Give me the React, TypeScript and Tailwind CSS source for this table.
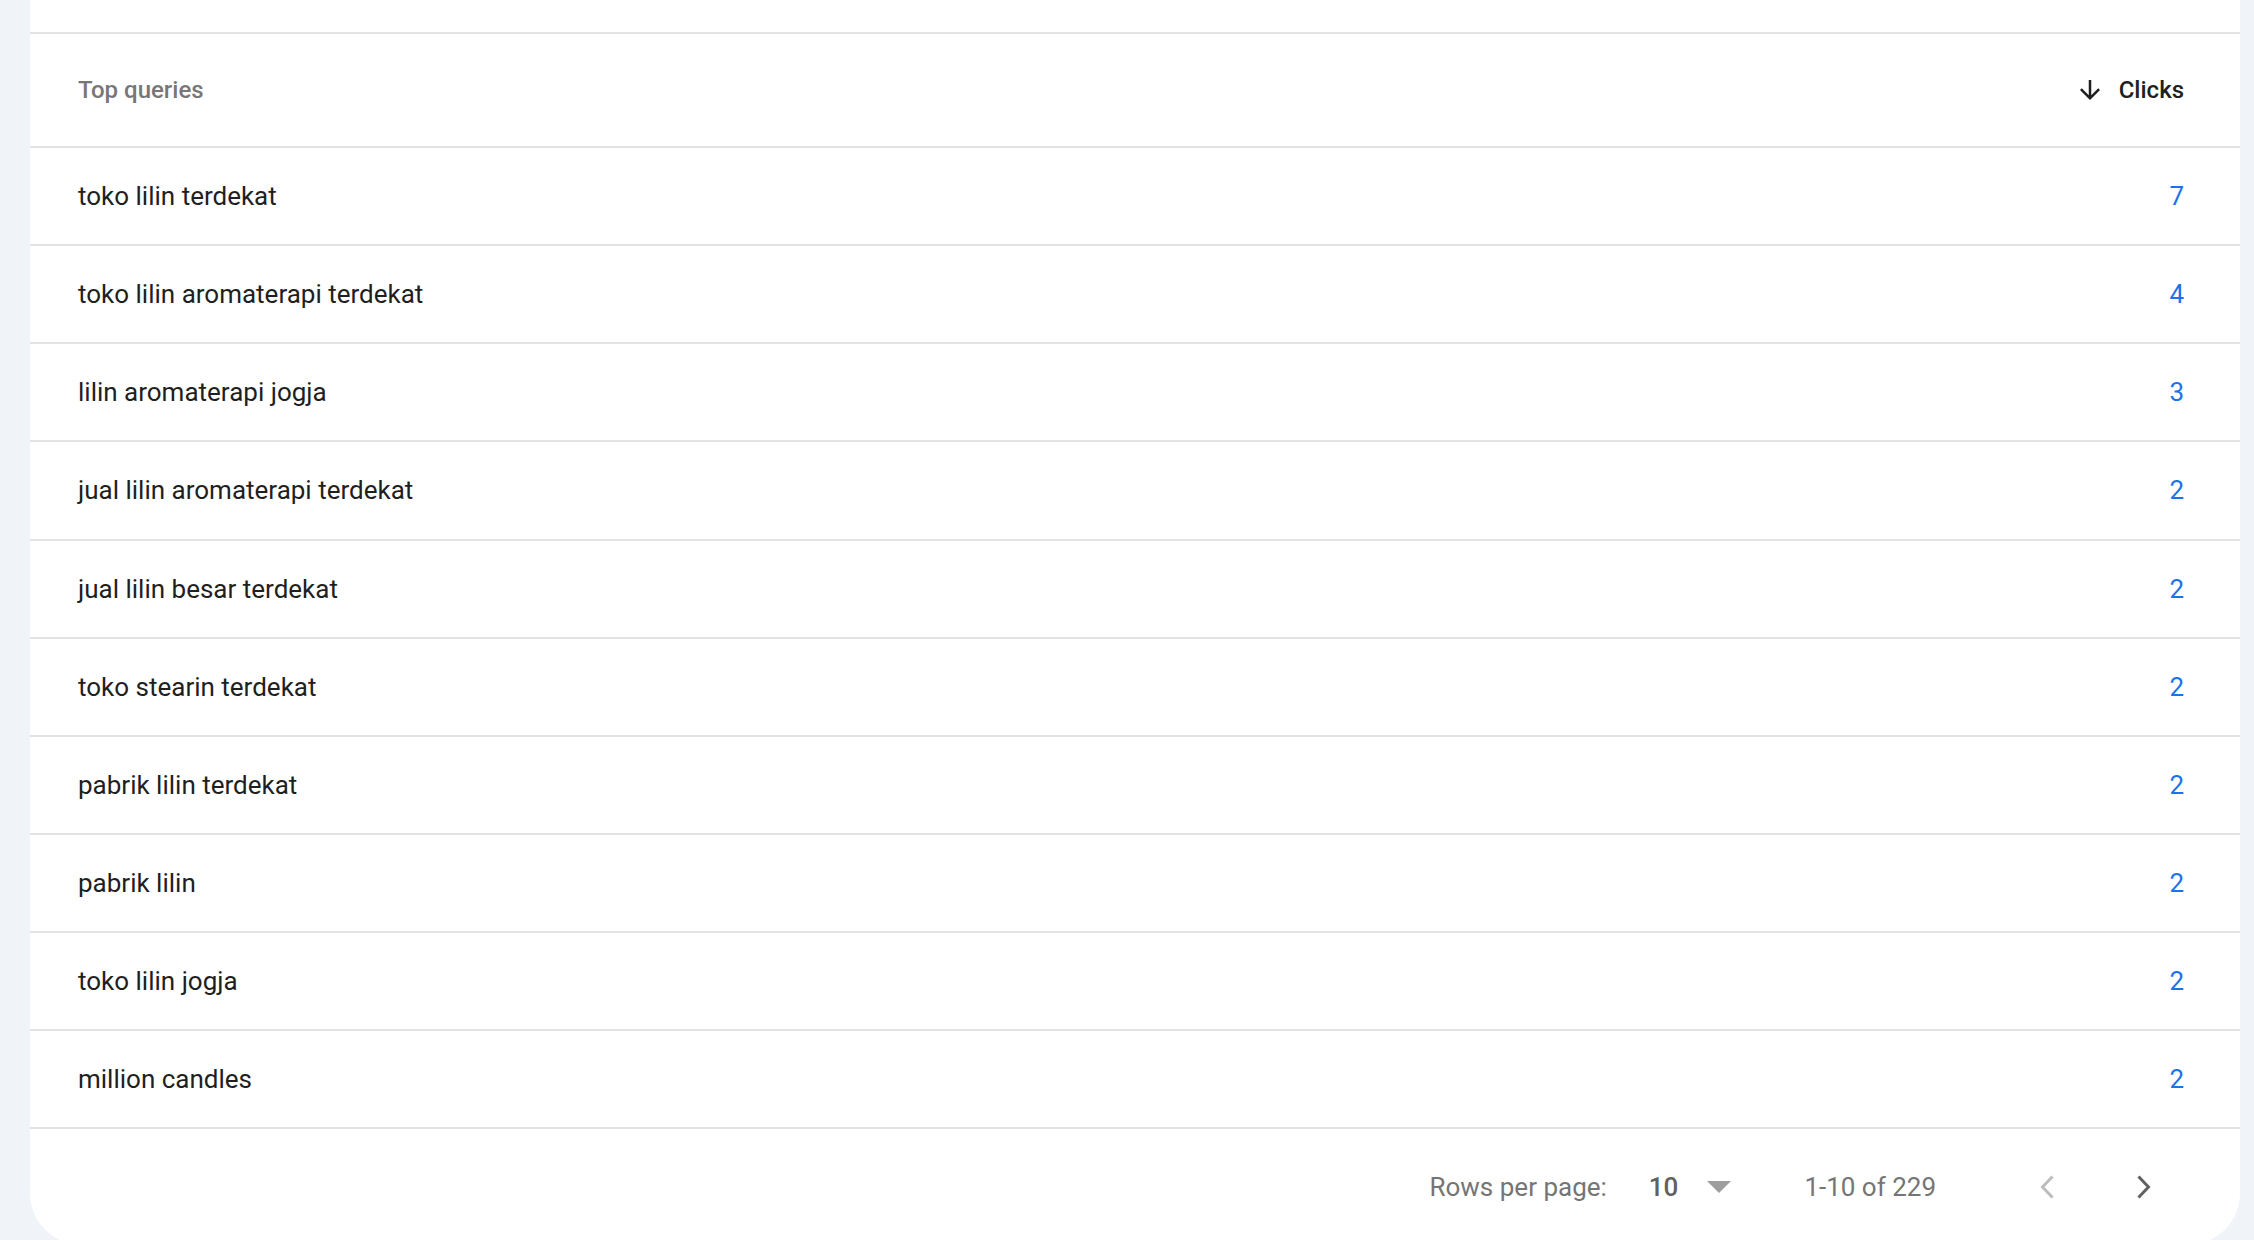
import React from 'react';

type Query = { query: string; clicks: number };

const queries: Query[] = [
  { query: 'toko lilin terdekat', clicks: 7 },
  { query: 'toko lilin aromaterapi terdekat', clicks: 4 },
  { query: 'lilin aromaterapi jogja', clicks: 3 },
  { query: 'jual lilin aromaterapi terdekat', clicks: 2 },
  { query: 'jual lilin besar terdekat', clicks: 2 },
  { query: 'toko stearin terdekat', clicks: 2 },
  { query: 'pabrik lilin terdekat', clicks: 2 },
  { query: 'pabrik lilin', clicks: 2 },
  { query: 'toko lilin jogja', clicks: 2 },
  { query: 'million candles', clicks: 2 },
];

const ArrowDown: React.FC = () => (
  <svg viewBox="0 0 24 24" className="w-[30px] h-[30px]" fill="#1f1f1f">
    <path d="M20 12l-1.41-1.41L13 16.17V4h-2v12.17l-5.58-5.59L4 12l8 8 8-8z" />
  </svg>
);

const Chevron: React.FC<{ dir: 'left' | 'right'; color: string }> = ({ dir, color }) => (
  <svg viewBox="0 0 16 24" className="w-[16px] h-[24px]" fill="none" stroke={color} strokeWidth={3}>
    {dir === 'left' ? <path d="M13.5 1.5 L3.5 12 L13.5 22.5" /> : <path d="M2.5 1.5 L12.5 12 L2.5 22.5" />}
  </svg>
);

const App: React.FC = () => {
  return (
    <div
      className="h-[1240px] overflow-hidden bg-[#f0f4f9] pl-[30px] pr-[14px]"
      style={{ fontFamily: 'Roboto, "Liberation Sans", sans-serif' }}
    >
      <div className="bg-white rounded-b-[52px] h-[1245px] flex flex-col">
        {/* previous section tail */}
        <div className="h-[32px] shrink-0" />

        {/* header */}
        <div className="h-[114px] shrink-0 border-t-2 border-[#e3e3e3] flex items-center justify-between pl-[48px] pr-[56px]">
          <span className="text-[24px] font-medium text-[#777777]">Top queries</span>
          <div className="flex items-center gap-[14px]">
            <ArrowDown />
            <span className="text-[24px] font-medium text-[#1f1f1f]">Clicks</span>
          </div>
        </div>

        {/* rows */}
        {queries.map((q, i) => (
          <div
            key={q.query}
            className={`shrink-0 border-t-2 border-[#e3e3e3] flex items-center justify-between pl-[48px] pr-[56px] ${
              i === 3 ? 'h-[99px]' : 'h-[98px]'
            }`}
          >
            <span className="text-[26px] text-[#1f1f1f]">{q.query}</span>
            <span className="text-[26px] text-[#1a73e8]">{q.clicks}</span>
          </div>
        ))}

        {/* pagination */}
        <div className="flex-1 border-t-2 border-[#e3e3e3] flex items-center justify-end pr-[72px] text-[26px] text-[#757575]">
          <span>Rows per page:</span>
          <span className="ml-[42px] font-medium text-[#616161]">10</span>
          <span className="ml-[29px] w-0 h-0 border-l-[12px] border-r-[12px] border-t-[12px] border-l-transparent border-r-transparent border-t-[#9e9e9e]" />
          <span className="ml-[73px]">1-10 of 229</span>
          <div className="ml-[87px] w-[48px] h-[48px] flex items-center justify-center">
            <Chevron dir="left" color="#bdbdbd" />
          </div>
          <div className="ml-[49px] w-[48px] h-[48px] flex items-center justify-center">
            <Chevron dir="right" color="#616161" />
          </div>
        </div>
      </div>
    </div>
  );
};

export default App;
